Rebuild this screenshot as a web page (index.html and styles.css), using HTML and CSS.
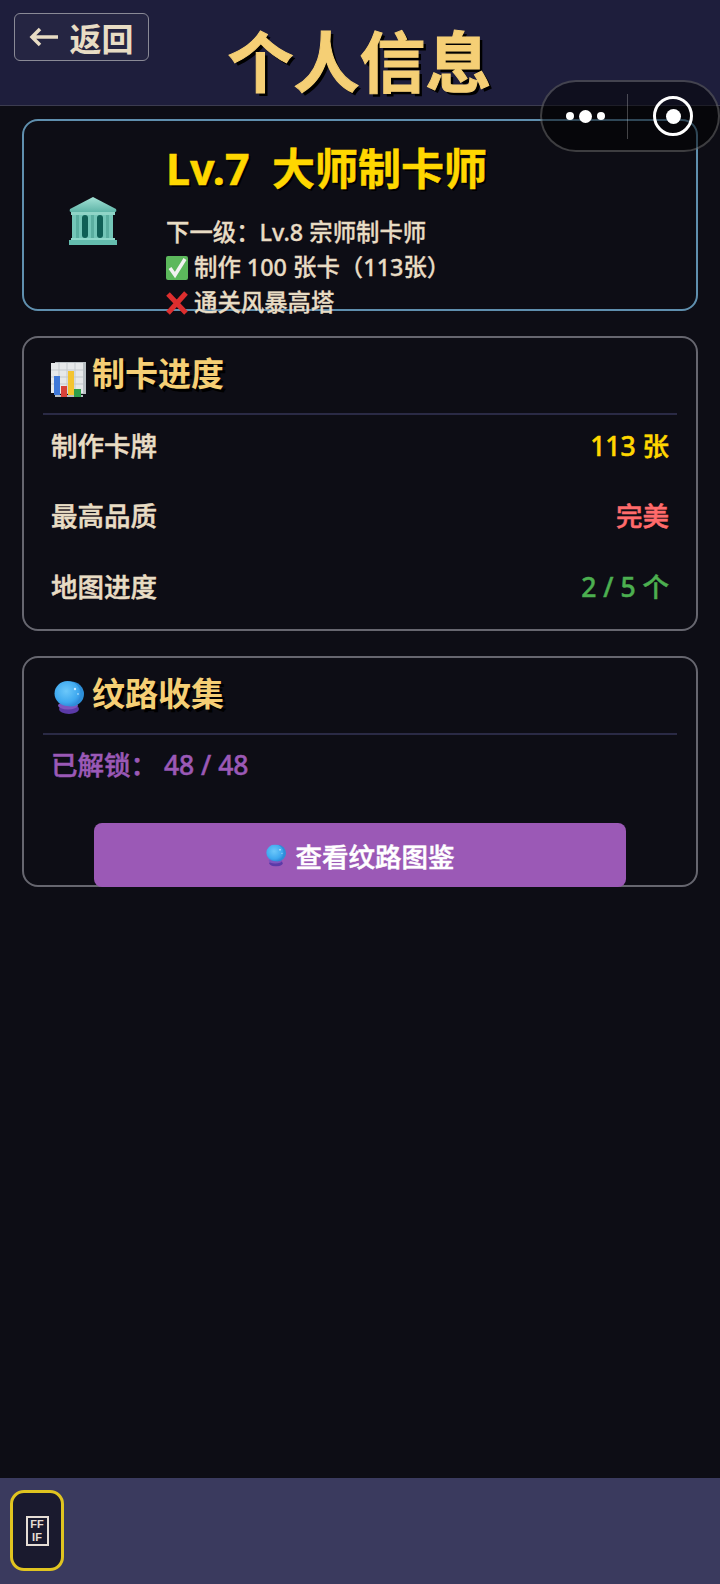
FILE: index.html
```html
<!DOCTYPE html>
<html lang="zh-CN">
<head>
  <meta charset="UTF-8" />
  <meta name="viewport" content="width=device-width, initial-scale=1.0" />
  <title>个人信息</title>
  <link rel="stylesheet" href="styles.css">
</head>
<body>

  <!-- shared icon -->
  <svg class="defs" width="0" height="0" aria-hidden="true">
    <defs>
      <radialGradient id="ball-fill" cx="45%" cy="40%" r="65%">
        <stop offset="0" stop-color="#6cc8fa" />
        <stop offset="0.7" stop-color="#3fa9ef" />
        <stop offset="1" stop-color="#2f86d8" />
      </radialGradient>
      <linearGradient id="roof-fill" x1="0" y1="0" x2="0" y2="1">
        <stop offset="0" stop-color="#a4e2d6" />
        <stop offset="1" stop-color="#5fb5a8" />
      </linearGradient>
      <symbol id="crystal" viewBox="0 0 30 33">
        <ellipse cx="15" cy="28" rx="10" ry="5" fill="#5b3aa8" />
        <ellipse cx="14" cy="24.500" rx="10" ry="4" fill="#7d55c0" />
        <ellipse cx="17" cy="13" rx="13" ry="12.500" fill="#2d8ed8" />
        <ellipse cx="13.500" cy="12.500" rx="13" ry="12.500" fill="url(#ball-fill)" />
        <circle cx="21" cy="8" r="1.200" fill="#cfeeff" />
        <circle cx="24" cy="13" r="0.800" fill="#cfeeff" />
      </symbol>
    </defs>
  </svg>

  <header class="topbar">
    <button class="back-btn">
      <svg width="30" height="20" viewBox="0 0 30 20">
        <path d="M29 10 H3 M11 2 L3 10 L11 18" fill="none" stroke="#e8dcc4" stroke-width="3.500" />
      </svg>
      返回
    </button>
    <h1 class="page-title">个人信息</h1>
  </header>

  <!-- capsule of the host app -->
  <div class="capsule">
    <div class="capsule-dots">
      <span class="dot"></span>
      <span class="dot big"></span>
      <span class="dot"></span>
    </div>
    <div class="capsule-line"></div>
    <div class="capsule-target"><span></span></div>
  </div>

  <main class="content">

    <section class="card level-card">
      <div class="level-icon">
        <svg width="48" height="48" viewBox="0 0 48 48">
          <path d="M24 0 L47 12 Q48 15 46 15 H2 Q0 15 1 12 Z" fill="url(#roof-fill)" />
          <rect x="2" y="15" width="44" height="3" fill="#8fd4c7" />
          <rect x="3" y="18" width="41" height="24" fill="#74c6b8" />
          <rect x="7" y="18" width="3" height="24" fill="#5aaea0" />
          <rect x="22" y="18" width="3" height="24" fill="#5aaea0" />
          <rect x="37" y="18" width="3" height="24" fill="#5aaea0" />
          <rect x="13" y="18" width="6" height="23" rx="3" fill="#0f5f56" />
          <rect x="28" y="18" width="6" height="23" rx="3" fill="#0f5f56" />
          <rect x="2" y="41" width="44" height="2" fill="#8fd8ca" />
          <rect x="0" y="43" width="48" height="5" fill="#64bcae" />
        </svg>
      </div>
      <div class="level-info">
        <div class="level-name">Lv.7&nbsp; 大师制卡师</div>
        <div class="level-next">下一级&#xFF1A;Lv.8 宗师制卡师</div>
        <div class="level-req">
          <svg width="22" height="24" viewBox="0 0 22 24">
            <rect width="22" height="24" rx="2" fill="#5cb85c" />
            <path d="M4 12 L9 19 L19 3" fill="none" stroke="#f2f2f2" stroke-width="3.500" />
          </svg>
          制作 100 张卡&#xFF08;113张&#xFF09;
        </div>
        <div class="level-req">
          <svg width="22" height="24" viewBox="0 0 22 24">
            <path d="M2 3 L20 22 M20 2 L2 22" fill="none" stroke="#dd2e2e" stroke-width="5" />
          </svg>
          通关风暴高塔
        </div>
      </div>
    </section>

    <section class="card">
      <h2 class="card-title">
        <svg class="title-icon" width="35" height="35" viewBox="0 0 35 35">
          <rect x="4" y="0" width="31" height="32" fill="#b9bfc4" />
          <rect x="0" y="1" width="32" height="30" fill="#e6e8ea" />
          <path d="M0 8 H32 M0 15 H32 M0 22 H32 M8 1 V31 M16 1 V31 M24 1 V31" stroke="#c4c9cd" stroke-width="1" />
          <rect x="4" y="33" width="28" height="2" fill="#b9bfc4" />
          <rect x="3" y="14" width="6" height="19" fill="#3f78d8" />
          <rect x="10" y="24" width="6" height="11" fill="#d8423a" />
          <rect x="17" y="9" width="6" height="24" fill="#f4c430" />
          <rect x="23" y="27" width="7" height="8" fill="#2f9e4a" />
        </svg>
        制卡进度
      </h2>
      <div class="row-list">
        <div class="row"><span>制作卡牌</span><span class="gold">113 张</span></div>
        <div class="row"><span>最高品质</span><span class="red">完美</span></div>
        <div class="row"><span>地图进度</span><span class="green">2 / 5 个</span></div>
      </div>
    </section>

    <section class="card pattern-card">
      <h2 class="card-title">
        <svg class="title-icon crystal-icon" width="30" height="33" viewBox="0 0 30 33"><use href="#crystal" /></svg>
        纹路收集
      </h2>
      <div class="unlocked">已解锁&#xFF1A; 48 / 48</div>
      <button class="atlas-btn">
        <svg width="20" height="23" viewBox="0 0 30 33"><use href="#crystal" /></svg>
        查看纹路图鉴
      </button>
    </section>

  </main>

  <footer class="bottombar">
    <div class="tab-btn">
      <span class="tofu">FF<br>IF</span>
    </div>
  </footer>

</body>
</html>
```

FILE: styles.css
```css
* {
  box-sizing: border-box;
  margin: 0;
  padding: 0;
}

html, body {
  height: 1584px;
  overflow: hidden;
}

body {
  position: relative;
  display: flex;
  flex-direction: column;
  font-family: "Noto Sans", "Noto Sans CJK SC", sans-serif;
  background: #0d0d15;
  color: #e8dcc4;
}

.defs {
  position: absolute;
}

/* --- TOP BAR --- */
.topbar {
  height: 106px;
  flex-shrink: 0;
  display: flex;
  justify-content: center;
  background: #1e1e3c;
  border-bottom: 1px solid #3c3c50;
}

.back-btn {
  position: absolute;
  top: 13px;
  left: 14px;
  width: 135px;
  height: 48px;
  display: flex;
  align-items: center;
  justify-content: center;
  gap: 10px;
  background: rgba(255, 255, 255, 0.03);
  border: 1px solid #8a8a96;
  border-radius: 6px;
  color: #e8dcc4;
  font-family: inherit;
  font-size: 32px;
  font-weight: 700;
}

.page-title {
  font-size: 66px;
  font-weight: 700;
  line-height: 80px;
  margin-top: 21px;
  margin-left: -1px;
  color: #f5cf75;
  -webkit-text-stroke: 1px #f5cf75;
  text-shadow: 3px 3px 0 #000;
}

/* --- WECHAT CAPSULE --- */
.capsule {
  position: absolute;
  top: 80px;
  left: 540px;
  width: 180px;
  height: 72px;
  display: flex;
  align-items: center;
  background: rgba(0, 0, 0, 0.5);
  border: 2px solid rgba(255, 255, 255, 0.22);
  border-radius: 36px;
}

.capsule-dots {
  display: flex;
  align-items: center;
  gap: 5px;
  margin-left: 24px;
}

.dot {
  width: 8px;
  height: 8px;
  border-radius: 50%;
  background: #fff;
}

.dot.big {
  width: 13px;
  height: 13px;
}

.capsule-line {
  width: 1px;
  height: 45px;
  margin-left: 22px;
  background: rgba(255, 255, 255, 0.25);
}

.capsule-target {
  width: 40px;
  height: 40px;
  margin-left: 25px;
  display: flex;
  justify-content: center;
  align-items: center;
  border: 3px solid #fff;
  border-radius: 50%;
}

.capsule-target span {
  width: 15px;
  height: 15px;
  border-radius: 50%;
  background: #fff;
}

/* --- CARDS --- */
.content {
  flex: 1;
  display: flex;
  flex-direction: column;
  gap: 25px;
  padding: 13px 22px 0;
}

.card {
  border: 2px solid #66666f;
  border-radius: 16px;
  padding: 0 19px;
}

.level-card {
  height: 192px;
  display: flex;
  align-items: center;
  border-color: #5f8fae;
  padding: 0;
}

.level-icon {
  width: 142px;
  flex-shrink: 0;
  display: flex;
  justify-content: center;
  margin-top: 12px;
  margin-left: -2px;
  margin-right: 2px;
}

.level-info {
  align-self: flex-start;
  padding-top: 17px;
}

.level-name {
  font-size: 43px;
  font-weight: 700;
  line-height: 62px;
  margin-bottom: 15px;
  color: #ffd700;
  -webkit-text-stroke: 0.5px #ffd700;
  text-shadow: 2px 2px 0 #000;
}

.level-next,
.level-req {
  font-size: 23.4px;
  line-height: 35px;
  font-weight: 500;
  color: #e8dcc4;
  -webkit-text-stroke: 0.3px #e8dcc4;
}

.level-req {
  display: flex;
  align-items: center;
  gap: 6px;
  white-space: nowrap;
}

.card-title {
  display: flex;
  align-items: center;
  gap: 6px;
  height: 77px;
  padding: 0 0 8px 8px;
  border-bottom: 2px solid #2a2a45;
  font-size: 33px;
  font-weight: 700;
  color: #f5cf75;
  text-shadow: 3px 3px 0 #000;
}

.title-icon {
  margin-top: 16px;
}

.crystal-icon {
  margin-top: 12px;
  margin-left: 3px;
  margin-right: 2px;
}

.row-list {
  display: flex;
  flex-direction: column;
  gap: 24.5px;
  padding: 6px 8px 21px;
}

.row {
  display: flex;
  justify-content: space-between;
  align-items: center;
  height: 46px;
  font-size: 26.5px;
  font-weight: 500;
  -webkit-text-stroke: 0.5px;
}

.gold { color: #ffd700; }
.red { color: #ff6b6b; }
.green { color: #4caf50; }

.pattern-card {
  height: 231px;
}

.unlocked {
  padding: 7px 8px 0;
  height: 88px;
  font-size: 26.5px;
  font-weight: 500;
  -webkit-text-stroke: 0.5px;
  line-height: 46px;
  color: #9b59b6;
}

.atlas-btn {
  display: flex;
  justify-content: center;
  align-items: center;
  gap: 10px;
  width: 532px;
  height: 64px;
  margin-left: 51px;
  background: #9b59b6;
  border: 0;
  border-radius: 8px;
  color: #fff;
  font-family: inherit;
  font-size: 26.5px;
  font-weight: 500;
  -webkit-text-stroke: 0.5px;
}

/* --- BOTTOM BAR --- */
.bottombar {
  height: 106px;
  flex-shrink: 0;
  padding: 12px 10px;
  background: #3a3a5e;
}

.tab-btn {
  width: 54px;
  height: 81px;
  display: flex;
  justify-content: center;
  align-items: center;
  background: #1a1a2e;
  border: 3px solid #e0c420;
  border-radius: 14px;
}

.tofu {
  width: 23px;
  height: 30px;
  border: 2px solid #e5ddd5;
  font-family: "Liberation Sans", sans-serif;
  font-size: 11px;
  font-weight: 700;
  line-height: 13px;
  text-align: center;
  color: #e5ddd5;
}
```
